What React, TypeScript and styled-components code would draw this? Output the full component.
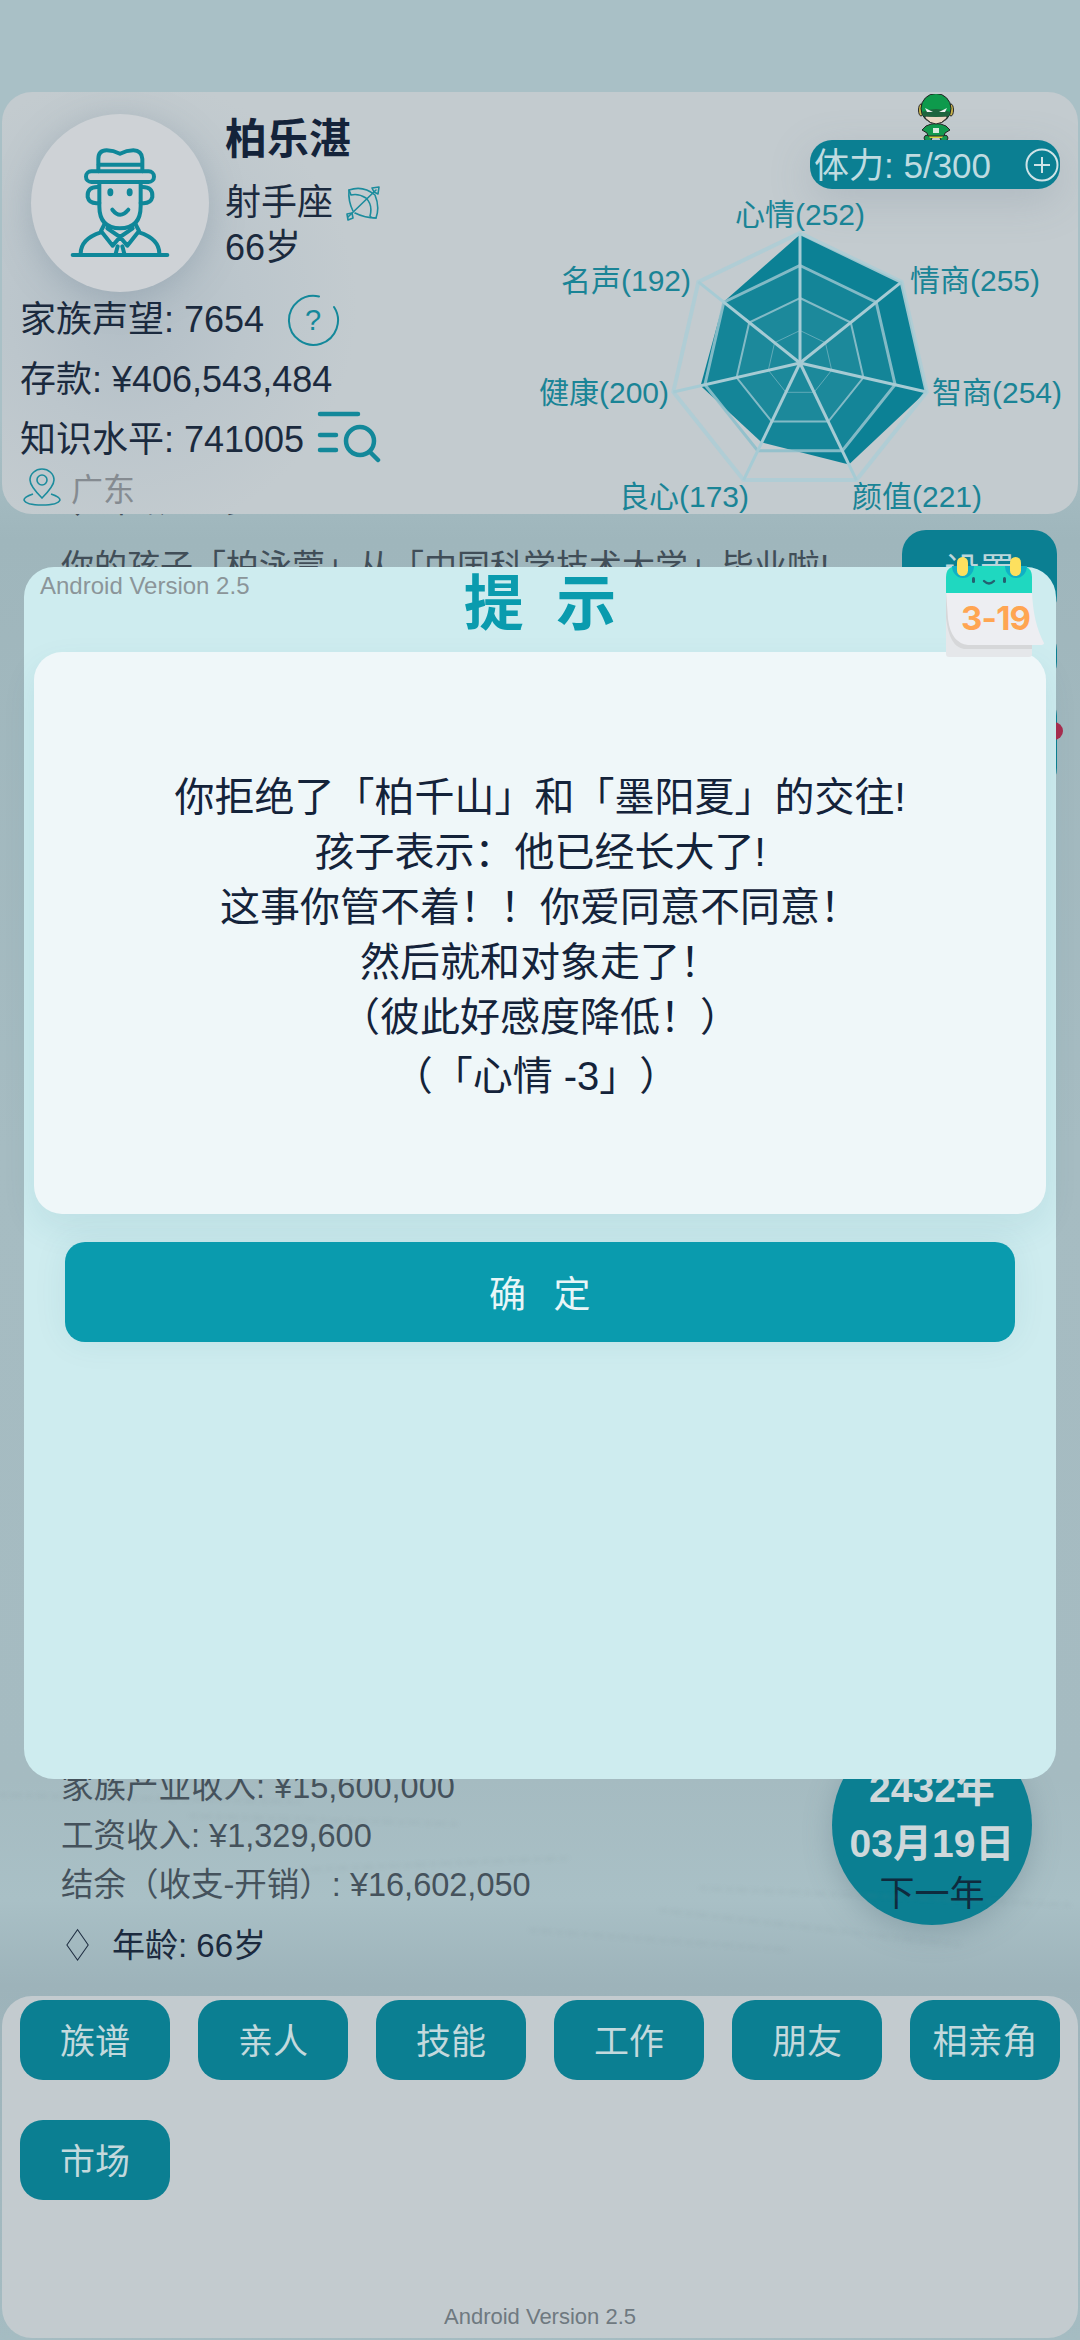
import React from "react";
import styled, { createGlobalStyle } from "styled-components";

const Global = createGlobalStyle`
  html, body { margin: 0; padding: 0; }
  body { width: 1080px; height: 2340px; overflow: hidden; font-family: "Liberation Sans", "Noto Sans CJK SC", sans-serif; text-spacing-trim: space-all; }
  * { box-sizing: border-box; }
`;

const Page = styled.div`
  position: relative; width: 1080px; height: 2340px; overflow: hidden;
  display: flex; flex-direction: column; padding: 92px 2px 2px;
  background: linear-gradient(180deg, #a9c0c6 0, #a9c0c6 420px, #9fb6bc 540px, #a6bcc2 1150px, #a5bbc1 1780px, #a9c0c6 1900px, #9db3ba 1985px, #a5bcc2 2340px);
`;
const Streaks = styled.svg`
  position: absolute; left: 0; top: 1740px; width: 1080px; height: 260px; filter: blur(2px);
`;
const Panel = styled.section`
  background: #c3cbcf; border-radius: 30px; flex: none; position: relative; z-index: 1;
`;
const Header = styled(Panel)`
  height: 422px; display: flex; justify-content: space-between; overflow: hidden; color: #17263b;
  background: radial-gradient(circle at 125px 215px, #b2bec6 0, #bcc6cc 120px, #c3cbcf 230px) , #c3cbcf;
`;
const LeftCol = styled.div`
  width: 520px; padding-left: 18px; display: flex; flex-direction: column;
`;
const Identity = styled.div`
  height: 198px; display: flex; align-items: flex-start;
`;
const Avatar = styled.div`
  width: 178px; height: 178px; margin: 22px 16px 0 11px; border-radius: 50%; background: #ced2d6; flex: none;
  box-shadow: 0 6px 34px rgba(108, 130, 145, 0.35); display: flex; align-items: center; justify-content: center;
`;
const AvatarIcon = styled.svg`width: 200px; height: 200px; flex: none;`;
const NameCol = styled.div`padding-top: 25px;`;
const Name = styled.div`font-size: 42px; font-weight: 700; line-height: 46px; height: 46px; margin-bottom: 17px; color: #14233a;`;
const SubLine = styled.div`font-size: 36px; line-height: 45px; height: 45px; display: flex; align-items: center; gap: 12px; color: #1b2a3e;`;
const ZodiacIcon = styled.svg`width: 36px; height: 36px;`;
const Stat = styled.div`font-size: 36px; line-height: 60px; height: 60px; display: flex; align-items: center; white-space: nowrap; color: #1b2a3e;`;
const HelpIcon = styled.svg`width: 54px; height: 54px; margin-left: 22px;`;
const SearchIcon = styled.svg`width: 64px; height: 52px; margin: -6px 0 0 13px;`;
const Place = styled.div`height: 40px; margin-top: -3px; display: flex; align-items: center; gap: 10px; font-size: 32px; color: #858b91; margin-left: 3px;`;
const PinIcon = styled.svg`width: 38px; height: 38px;`;

const RightCol = styled.div`
  width: 540px; display: flex; flex-direction: column; align-items: flex-end; flex: none;
`;
const Hero = styled.svg`width: 36px; height: 47px; margin: 2px 124px -1px 0; display: block;`;
const Stamina = styled.div`
  width: 250px; height: 49px; margin-right: 18px; border-radius: 22px; background: #0b7f92; color: #bfdbe0; flex: none;
  font-size: 35px; display: flex; align-items: center; justify-content: space-between; padding: 0 1px 4px 4px;
  box-shadow: 0 12px 40px rgba(120, 135, 150, 0.25);
`;
const PlusIcon = styled.svg`width: 34px; height: 34px; margin-top: 4px;`;
const RadarSvg = styled.svg`width: 540px; height: 325px; display: block; overflow: visible; flex: none;`;
const RadarLabel = styled.text`font-size: 30px; fill: #1a8496; font-family: "Liberation Sans", "Noto Sans CJK SC", sans-serif;`;

const Main = styled.main`
  flex: 1; display: flex; flex-direction: column; justify-content: space-between; overflow: hidden; color: #414e58;
`;
const Upper = styled.div`display: flex; justify-content: space-between;`;
const Log = styled.div`padding-left: 59px; margin-top: -38px;`;
const LogLine = styled.div`font-size: 33px; line-height: 50px; margin-bottom: 16px; white-space: nowrap;`;
const SideButtons = styled.div`width: 155px; margin: 16px 21px 0 0; display: flex; flex-direction: column; gap: 6px;`;
const SideButton = styled.div<{ $h: number }>`
  position: relative; height: ${(p) => p.$h}px; border-radius: 24px; background: #0b7f92; color: #bcd6db; font-size: 35px; padding-bottom: 16px;
  display: flex; align-items: center; justify-content: center;
`;
const Badge = styled.span`
  position: absolute; right: -6px; top: 30px; width: 18px; height: 18px; border-radius: 50%; background: #a82c4e;
`;
const Lower = styled.div`display: flex; justify-content: space-between; align-items: flex-end;`;
const Status = styled.div`padding: 0 0 25px 59px;`;
const StatusLine = styled.div`font-size: 32.5px; line-height: 49px; white-space: nowrap; color: #45525c;`;
const AgeLine = styled.div`font-size: 33px; line-height: 50px; margin-top: 11px; color: #1b2a3e; display: flex; gap: 18px;`;
const Diamond = styled.span`display: inline-block; transform: scaleX(0.7);`;
const DateCircle = styled.div`
  width: 200px; height: 200px; border-radius: 50%; background: #0b7f92; margin: 0 46px 71px 0; padding-top: 38px;
  display: flex; flex-direction: column; align-items: center; box-shadow: 0 8px 28px rgba(90, 115, 125, 0.35);
`;
const DateText = styled.div`font-size: 39px; font-weight: 700; line-height: 51px; margin-bottom: 4px; color: #cfd8db; white-space: nowrap;`;
const NextYear = styled.div`font-size: 35px; line-height: 50px; margin-top: -4px; color: #0f2b3e;`;

const Footer = styled(Panel)`height: 342px; position: relative; padding: 4px 18px 0;`;
const Tabs = styled.div`display: grid; grid-template-columns: repeat(6, 150px); column-gap: 28px; row-gap: 40px;`;
const Tab = styled.div`
  height: 80px; border-radius: 23px; background: #0b7f92; color: #c3d9dd; font-size: 35px; padding-bottom: 4px;
  display: flex; align-items: center; justify-content: center;
`;
const Version = styled.div`
  position: absolute; left: 0; right: 0; bottom: 8px; text-align: center; font-size: 22px; line-height: 26px; color: #6f7980;
`;

const Dialog = styled.div`
  position: absolute; z-index: 5; left: 24px; top: 567px; width: 1032px; height: 1212px; border-radius: 30px;
  background: #ceecef; padding: 0 10px; display: flex; flex-direction: column;
`;
const DialogVersion = styled.div`
  position: absolute; left: 16px; top: 5px; font-size: 24px; line-height: 28px; color: #8b9599;
`;
const Title = styled.div`
  height: 85px; line-height: 76px; padding-left: 8px; text-align: center; font-size: 60px; font-weight: 700; letter-spacing: 8px; color: #0a9bae; flex: none; white-space: pre;
`;
const Card = styled.div`
  height: 562px; flex: none; border-radius: 28px; background: #eff7f9; color: #14233a; font-size: 40px; line-height: 55px;
  display: flex; flex-direction: column; align-items: center; justify-content: center; padding-top: 8px;
  box-shadow: 0 14px 34px rgba(20, 100, 120, 0.09);
`;
const CardLine = styled.div`white-space: pre;`;
const LastLine = styled(CardLine)`margin: 4px 8px 0 0;`;
const Confirm = styled.div`
  height: 100px; margin: 28px 31px 0; flex: none; border-radius: 20px; background: #0a9bae; color: #e8f6f8; font-size: 37px; letter-spacing: 8.5px; padding-left: 8px;
  display: flex; align-items: center; justify-content: center; white-space: pre; box-shadow: 0 0 34px rgba(20, 100, 120, 0.08);
`;
const Calendar = styled.div`
  position: absolute; right: 10px; top: -10px; width: 100px; height: 102px;
`;
const CalendarArt = styled.svg`width: 100px; height: 102px; display: block;`;
const CalendarDate = styled.span`
  position: absolute; left: 15px; top: 41px; font-family: Inter, "Liberation Sans", sans-serif; font-size: 33px; font-weight: 700; line-height: 40px; letter-spacing: -0.8px; color: #ffa552;
`;

const labels = [
  { name: "心情(252)", v: 252, x: 262, y: 25, a: "middle" },
  { name: "情商(255)", v: 255, x: 372, y: 91, a: "start" },
  { name: "智商(254)", v: 254, x: 394, y: 203, a: "start" },
  { name: "颜值(221)", v: 221, x: 314, y: 307, a: "start" },
  { name: "良心(173)", v: 173, x: 81, y: 307, a: "start" },
  { name: "健康(200)", v: 200, x: 1, y: 203, a: "start" },
  { name: "名声(192)", v: 192, x: 23, y: 91, a: "start" },
];
const CX = 262, CY = 174, R = 130;
const pt = (i: number, r: number) => {
  const t = (-90 + (i * 360) / 7) * (Math.PI / 180);
  return [CX + r * Math.cos(t), CY + r * Math.sin(t)];
};
const ring = (r: number) => labels.map((_, i) => pt(i, r).map((n) => n.toFixed(1)).join(",")).join(" ");
const dataPoly = labels.map((l, i) => pt(i, (l.v / 255) * R).map((n) => n.toFixed(1)).join(",")).join(" ");

function Radar() {
  return (
    <RadarSvg viewBox="0 0 540 325">
      <polygon points={dataPoly} fill="#0c8195" />
      <polygon points={ring(R * 0.75)} fill="rgba(255,255,255,0.035)" />
      <polygon points={ring(R * 0.5)} fill="rgba(255,255,255,0.035)" />
      {[0.25, 0.5, 0.75, 1].map((k, i) => (
        <polygon key={k} points={ring(R * k)} fill="none" stroke={i === 3 ? "#aecdd5" : "#8fc0cb"} strokeWidth={i === 3 ? 4 : i + 1} strokeOpacity={i === 0 ? 0.6 : 0.9} />
      ))}
      {labels.map((_, i) => {
        const [x, y] = pt(i, R);
        return <line key={i} x1={CX} y1={CY} x2={x} y2={y} stroke="#a6cbd4" strokeWidth={3} />;
      })}
      {labels.map((l) => (
        <RadarLabel key={l.name} x={l.x} y={l.y} textAnchor={l.a as "middle" | "start"} dominantBaseline="central">{l.name}</RadarLabel>
      ))}
    </RadarSvg>
  );
}

function Man() {
  return (
    <AvatarIcon viewBox="0 0 600 600" fill="none" stroke="#0f8799" strokeWidth={12} strokeLinecap="round" strokeLinejoin="round">
      <path d="M235 205V168Q235 142 260 142Q280 142 300 152Q320 142 340 142Q365 142 367 168V205" />
      <path d="M236 185H366" />
      <rect x="198" y="205" width="204" height="32" rx="16" />
      <path d="M238 238V310Q238 376 300 376Q362 376 362 310V238" />
      <path d="M236 252Q200 250 203 282Q208 304 238 300M364 252Q400 250 397 282Q392 304 362 300" />
      <ellipse cx="271" cy="268" rx="3" ry="6" fill="#0f8799" />
      <ellipse cx="329" cy="268" rx="3" ry="6" fill="#0f8799" />
      <path d="M277 320Q300 350 325 320" />
      <path d="M253 364L243 384L278 428L300 402L322 428L357 384L347 364M262 376L300 402L338 376" />
      <path d="M287 452L293 430M313 452L307 430" />
      <path d="M182 455Q180 408 243 388M418 455Q420 408 357 388" />
      <path d="M158 456H442" />
    </AvatarIcon>
  );
}

function Zodiac() {
  return (
    <ZodiacIcon viewBox="0 0 36 36" fill="none" stroke="#1c8c9d" strokeWidth={1.6} strokeLinejoin="round" strokeLinecap="round">
      <path d="M3 32L31 5" />
      <path d="M27 3L34 2L33 9L29 7Z" />
      <path d="M2 29L7 28L8 33L3 35Z" />
      <path d="M4 5Q18 0 30 10Q35 22 31 33Q26 33 25 31Q28 20 21 13Q13 8 6 10Z" />
      <path d="M4 5Q3 16 8 26M31 33Q20 33 10 28" />
    </ZodiacIcon>
  );
}

function Help() {
  return (
    <HelpIcon viewBox="0 0 54 54" fill="none" stroke="#13889a" strokeWidth={2}>
      <path d="M33 3.5A24.5 24.5 0 1 0 48 14" strokeLinecap="round" />
      <text x="27" y="37" textAnchor="middle" fontSize="29" fill="#13889a" stroke="none" fontFamily="Liberation Sans, sans-serif">?</text>
    </HelpIcon>
  );
}

function Search() {
  return (
    <SearchIcon viewBox="0 0 64 52" fill="none" stroke="#13889a" strokeWidth={4.5} strokeLinecap="round">
      <path d="M3 3H41M3 24H19M3 39H19" />
      <circle cx="43" cy="30" r="14" />
      <path d="M53 41L61 49" />
    </SearchIcon>
  );
}

function Pin() {
  return (
    <PinIcon viewBox="0 0 38 38" fill="none" stroke="#1c8c9d" strokeWidth={1.6}>
      <path d="M19 30Q7 18 7 12A12 11 0 0 1 31 12Q31 18 19 30Z" />
      <circle cx="19" cy="12" r="5" />
      <path d="M10 26Q1 29 1 32Q3 37 19 37Q35 37 37 32Q37 29 28 26" />
    </PinIcon>
  );
}

function HeroArt() {
  return (
    <Hero viewBox="0 0 36 47">
      <ellipse cx="3" cy="16" rx="2.5" ry="6" fill="#c8b34b" stroke="#2a2a2a" strokeWidth="1" />
      <ellipse cx="33" cy="16" rx="2.5" ry="6" fill="#c8b34b" stroke="#2a2a2a" strokeWidth="1" />
      <ellipse cx="10" cy="44" rx="4" ry="3" fill="#0e9a4c" stroke="#222" strokeWidth="1" />
      <ellipse cx="26" cy="44" rx="4" ry="3" fill="#0e9a4c" stroke="#222" strokeWidth="1" />
      <path d="M10 41H26L24 44H12Z" fill="#d9d93a" />
      <path d="M8 32Q18 27 28 32L32 36L27 39L26 42H10L9 39L4 36Z" fill="#0e9a4c" stroke="#222" strokeWidth="1" />
      <rect x="15" y="34" width="6" height="5" fill="#dbeee0" />
      <circle cx="18" cy="14.5" r="15" fill="#0e9a4c" stroke="#222" strokeWidth="1" />
      <path d="M7 24Q18 36 29 24L29 22H7Z" fill="#ecd9c5" stroke="#222" strokeWidth="1" />
      <path d="M4 18Q18 12 32 18L30 22Q18 24 6 22Z" fill="#21663f" />
      <path d="M7 14L15 18H9ZM29 14L21 18H27Z" fill="#f4f4f4" />
    </Hero>
  );
}

function CalendarIcon() {
  return (
    <CalendarArt viewBox="0 0 100 102">
      <rect x="0" y="30" width="86" height="70" rx="3" fill="#e5e7ea" />
      <path d="M0 34H86V92H18Q3 90 0 60Z" fill="#d6d7d9" />
      <path d="M0 34H86Q87 66 98 86Q98 88 94 88H22Q5 86 2 62Z" fill="#edeef2" />
      <path d="M0 36V20Q0 9 12 9H74Q86 9 86 20V36Z" fill="#1fd8c0" />
      <path d="M6 9A11 12 0 0 0 28 9Z" fill="#10b0c5" />
      <path d="M59 9A11 12 0 0 0 81 9Z" fill="#10b0c5" />
      <rect x="11" y="0" width="11" height="19" rx="5.5" fill="#fde05e" />
      <rect x="64" y="0" width="11" height="19" rx="5.5" fill="#fde05e" />
      <rect x="26" y="20" width="3" height="6" rx="1.5" fill="#246070" />
      <rect x="57" y="20" width="3" height="6" rx="1.5" fill="#246070" />
      <path d="M38 24Q43 29 48 24" stroke="#246070" strokeWidth="2.4" fill="none" strokeLinecap="round" />
    </CalendarArt>
  );
}

const tabs = ["族谱", "亲人", "技能", "工作", "朋友", "相亲角", "市场"];

export default function App() {
  return (
    <Page>
      <Global />
      <Streaks viewBox="0 0 1080 260" fill="none" stroke="#74898f" strokeWidth="2" strokeOpacity="0.16">
        <path d="M0 55L300 62M190 76L460 84M300 130L570 118M700 148L1070 165M660 170L960 205M530 190L790 210" strokeDasharray="7 3 12 4" />
      </Streaks>
      <Header>
        <LeftCol>
          <Identity>
            <Avatar><Man /></Avatar>
            <NameCol>
              <Name>柏乐湛</Name>
              <SubLine>射手座 <Zodiac /></SubLine>
              <SubLine>66岁</SubLine>
            </NameCol>
          </Identity>
          <Stat>家族声望: 7654<Help /></Stat>
          <Stat>存款: ¥406,543,484</Stat>
          <Stat>知识水平: 741005<Search /></Stat>
          <Place><Pin />广东</Place>
        </LeftCol>
        <RightCol>
          <HeroArt />
          <Stamina>
            体力: 5/300
            <PlusIcon viewBox="0 0 34 34" fill="none" stroke="#cfe3e7" strokeWidth="2">
              <circle cx="17" cy="17" r="15.5" />
              <path d="M9 17H25M17 9V25" />
            </PlusIcon>
          </Stamina>
          <Radar />
        </RightCol>
      </Header>

      <Main>
        <Upper>
          <Log>
            <LogLine>◇ 年龄: 65岁</LogLine>
            <LogLine>你的孩子「柏泳萱」从「中国科学技术大学」毕业啦!</LogLine>
          </Log>
          <SideButtons>
            <SideButton $h={90}>设置</SideButton>
            <SideButton $h={60} />
            <SideButton $h={100}><Badge /></SideButton>
          </SideButtons>
        </Upper>
        <Lower>
          <Status>
            <StatusLine>家族产业收入: ¥15,600,000</StatusLine>
            <StatusLine>工资收入: ¥1,329,600</StatusLine>
            <StatusLine>结余（收支-开销）: ¥16,602,050</StatusLine>
            <AgeLine><Diamond>◇</Diamond><span>年龄: 66岁</span></AgeLine>
          </Status>
          <DateCircle>
            <DateText>2432年</DateText>
            <DateText>03月19日</DateText>
            <NextYear>下一年</NextYear>
          </DateCircle>
        </Lower>
      </Main>

      <Footer>
        <Tabs>
          {tabs.map((t) => <Tab key={t}>{t}</Tab>)}
        </Tabs>
        <Version>Android Version 2.5</Version>
      </Footer>

      <Dialog>
        <DialogVersion>Android Version 2.5</DialogVersion>
        <Title>提 示</Title>
        <Card>
          <CardLine>你拒绝了「柏千山」和「墨阳夏」的交往!</CardLine>
          <CardLine>孩子表示：他已经长大了!</CardLine>
          <CardLine>这事你管不着！！你爱同意不同意！</CardLine>
          <CardLine>然后就和对象走了！</CardLine>
          <CardLine>（彼此好感度降低！）</CardLine>
          <LastLine>（「心情 -3」）</LastLine>
        </Card>
        <Confirm>确 定</Confirm>
        <Calendar>
          <CalendarIcon />
          <CalendarDate>3-19</CalendarDate>
        </Calendar>
      </Dialog>
    </Page>
  );
}
